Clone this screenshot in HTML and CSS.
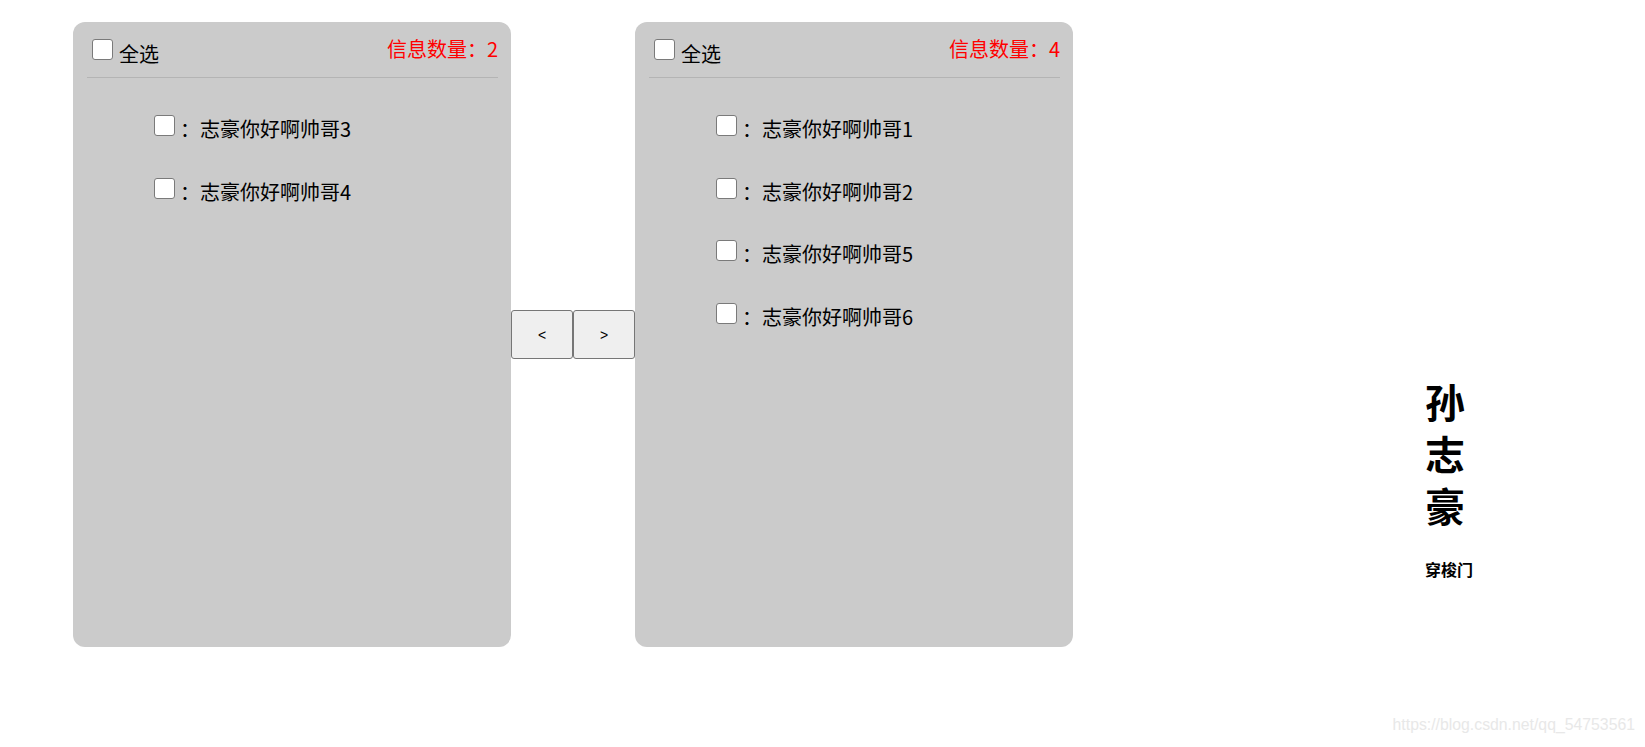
FILE: index.html
```html
<!DOCTYPE html>
<html lang="zh">
<head>
<meta charset="utf-8">
<title>穿梭门</title>
<link rel="stylesheet" href="styles.css">
</head>
<body>
<div class="page">
  <div class="transfer">
    <div class="panel">
      <div class="panel-head">
        <label class="select-all"><input type="checkbox" class="box"><span class="select-text">全选</span></label>
        <span class="count">信息数量：2</span>
      </div>
      <ul class="list">
        <li class="item"><input type="checkbox" class="box"><span class="item-text">：志豪你好啊帅哥3</span></li>
        <li class="item"><input type="checkbox" class="box"><span class="item-text">：志豪你好啊帅哥4</span></li>
      </ul>
    </div>
    <div class="buttons">
      <button class="btn">&lt;</button>
      <button class="btn">&gt;</button>
    </div>
    <div class="panel">
      <div class="panel-head">
        <label class="select-all"><input type="checkbox" class="box"><span class="select-text">全选</span></label>
        <span class="count">信息数量：4</span>
      </div>
      <ul class="list">
        <li class="item"><input type="checkbox" class="box"><span class="item-text">：志豪你好啊帅哥1</span></li>
        <li class="item"><input type="checkbox" class="box"><span class="item-text">：志豪你好啊帅哥2</span></li>
        <li class="item"><input type="checkbox" class="box"><span class="item-text">：志豪你好啊帅哥5</span></li>
        <li class="item"><input type="checkbox" class="box"><span class="item-text">：志豪你好啊帅哥6</span></li>
      </ul>
    </div>
  </div>
  <div class="side">
    <div class="name">孙志豪</div>
    <div class="subtitle">穿梭门</div>
  </div>
</div>
<div class="watermark">https://blog.csdn.net/qq_54753561</div>
</body>
</html>
```
FILE: styles.css
```css
html, body {
  margin: 0;
  padding: 0;
  background: #fff;
}
body {
  font-family: "Noto Sans CJK SC", "Noto Sans", sans-serif;
  color: #000;
  width: 1645px;
  height: 747px;
  overflow: hidden;
  position: relative;
}
.page {
  display: flex;
  align-items: flex-start;
  padding: 22px 0 0 73px;
}
.transfer {
  display: flex;
  align-items: center;
}
.panel {
  width: 438px;
  height: 625px;
  box-sizing: border-box;
  background: #cbcbcb;
  border-radius: 12px;
  padding: 12px 13px 0 14px;
}
.panel-head {
  display: flex;
  justify-content: space-between;
  align-items: flex-start;
  height: 43px;
  border-bottom: 1px solid #b4b4b4;
}
.select-all {
  display: flex;
  align-items: flex-start;
  margin-top: 5px;
  font-size: 20px;
  line-height: 26px;
}
.select-all .box {
  margin: 0 6px 0 5px;
}
.select-text {
  margin-top: 2px;
}
.count {
  color: #ff0000;
  font-size: 20px;
  line-height: 26px;
  margin-top: 2px;
}
.box {
  -webkit-appearance: none;
  appearance: none;
  width: 21px;
  height: 21px;
  box-sizing: border-box;
  border: 1px solid #7a7a7a;
  border-radius: 3px;
  background: #fff;
  flex: none;
}
.list {
  list-style: none;
  margin: 0;
  padding: 37px 0 0 67px;
}
.item {
  display: flex;
  align-items: flex-start;
  height: 62.7px;
}
.item .box {
  margin: 0 5px 0 0;
}
.item-text {
  font-size: 20px;
  line-height: 26px;
  margin-top: 1px;
}
.buttons {
  display: flex;
}
.btn {
  width: 62px;
  height: 49px;
  box-sizing: border-box;
  background: #efefef;
  border: 1px solid #767676;
  border-radius: 3px;
  font-family: "Liberation Sans", Arial, sans-serif;
  font-size: 14px;
  color: #000;
  padding: 0;
  margin: 0;
}
.side {
  margin-left: 352px;
  margin-top: 353px;
}
.name {
  width: 40px;
  font-size: 40px;
  line-height: 52px;
  font-weight: bold;
}
.subtitle {
  margin-top: 27px;
  font-size: 16px;
  line-height: 22px;
  font-weight: bold;
}
.watermark {
  position: absolute;
  right: 10px;
  top: 716px;
  font-family: "Liberation Sans", Arial, sans-serif;
  font-size: 15.8px;
  color: #e8e8e8;
}
```
